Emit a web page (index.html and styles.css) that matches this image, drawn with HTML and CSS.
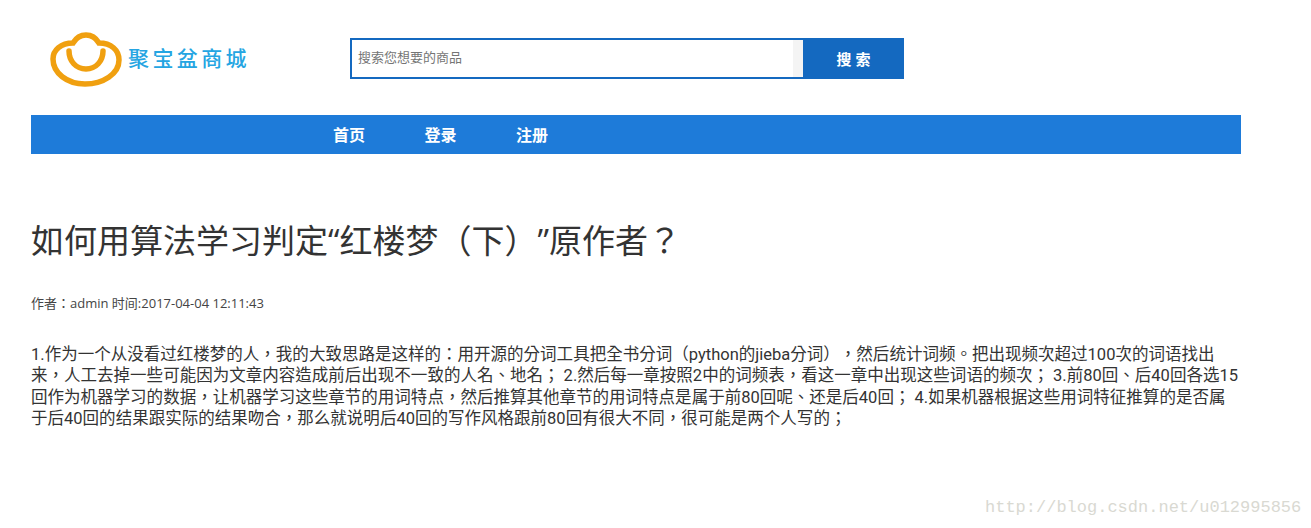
FILE: index.html
```html
<!DOCTYPE html>
<html lang="zh-Hant">
<head>
<meta charset="utf-8">
<title>如何用算法学习判定“红楼梦（下）”原作者？</title>
<link rel="stylesheet" href="styles.css">
</head>
<body>
<div class="page">
  <header class="top">
    <a class="logo">
      <svg class="logo-mark" width="74" height="58" viewBox="0 0 74 58">
        <path class="logo-stroke" d="M24 11C27 6 32 3 37 3C42 3 47 6 50 11C62 11 70 18 70 28C70 42 54 52 36 52C18 52 4 41 4 27C4 18 12 11 24 11Z"/>
        <path class="logo-stroke" d="M20 19C20 29 27 37 37 37C47 37 54 29 54 19"/>
      </svg>
      <span class="logo-text" lang="zh-Hans">聚宝盆商城</span>
    </a>
    <form class="search">
      <div class="search-box"><span class="search-hint">搜索您想要的商品</span><span class="search-end"></span></div>
      <div class="search-btn">搜 索</div>
    </form>
  </header>
  <nav class="nav">
    <a class="nav-item">首页</a>
    <a class="nav-item">登录</a>
    <a class="nav-item">注册</a>
  </nav>
  <h1 class="title">如何用算法学习判定“红楼梦（下）”原作者？</h1>
  <p class="meta">作者：admin 时间:2017-04-04 12:11:43</p>
  <p class="body">1.作为一个从没看过红楼梦的人，我的大致思路是这样的：用开源的分词工具把全书分词（python的jieba分词），然后统计词频。把出现频次超过100次的词语找出来，人工去掉一些可能因为文章内容造成前后出现不一致的人名、地名； 2.然后每一章按照2中的词频表，看这一章中出现这些词语的频次； 3.前80回、后40回各选15回作为机器学习的数据，让机器学习这些章节的用词特点，然后推算其他章节的用词特点是属于前80回呢、还是后40回； 4.如果机器根据这些用词特征推算的是否属于后40回的结果跟实际的结果吻合，那么就说明后40回的写作风格跟前80回有很大不同，很可能是两个人写的；</p>
</div>
<div class="watermark">http://blog.csdn.net/u012995856</div>
</body>
</html>
```
FILE: styles.css
```css
html, body {
  margin: 0;
  padding: 0;
  height: 528px;
  overflow: hidden;
  background: #fff;
}
body {
  font-family: "Open Sans", "Noto Sans CJK TC", sans-serif;
  color: #333;
  position: relative;
  text-spacing-trim: space-all;
}
.page {
  width: 1210px;
  margin-left: 31px;
}
.top {
  display: flex;
  height: 115px;
  padding-left: 18px;
  box-sizing: border-box;
}
.logo {
  display: flex;
  align-items: flex-start;
  width: 301px;
  padding-top: 32px;
}
.logo-mark { flex: none; }
.logo-stroke {
  fill: none;
  stroke: #f0a010;
  stroke-width: 5.5;
  stroke-linecap: round;
}
.logo-text {
  margin: 12px 0 0 5px;
  font-family: "Noto Sans CJK SC", sans-serif;
  font-size: 21px;
  line-height: 26px;
  letter-spacing: 3.4px;
  font-weight: 500;
  color: #25a5e2;
  white-space: nowrap;
}
.search {
  display: flex;
  width: 554px;
  height: 41px;
  margin: 38px 0 0;
}
.search-box {
  flex: 1;
  display: flex;
  align-items: center;
  justify-content: space-between;
  box-sizing: border-box;
  border: 2px solid #1469c0;
  border-right: 0;
  padding-left: 6px;
  background: #fff;
}
.search-hint {
  font-size: 13px;
  color: #757575;
  margin-top: -4px;
}
.search-end {
  align-self: stretch;
  width: 10px;
  background: #f4f4f4;
}
.search-btn {
  flex: none;
  width: 101px;
  background: #1469c0;
  color: #fff;
  font-size: 15px;
  font-weight: 700;
  text-align: center;
  line-height: 43px;
}
.nav {
  display: flex;
  gap: 59.5px;
  height: 39px;
  padding-left: 302px;
  background: #1e7bd9;
}
.nav-item {
  color: #fff;
  font-size: 16px;
  font-weight: 700;
  line-height: 40px;
}
.title {
  margin: 64px 0 0;
  font-size: 33px;
  line-height: 46px;
  font-weight: 400;
  color: #333;
}
.meta {
  margin: 30px 0 0;
  font-size: 13px;
  line-height: 18px;
  color: #444;
}
.body {
  margin: 32px 0 0;
  font-family: Roboto, "Noto Sans CJK TC", sans-serif;
  font-size: 16.52px;
  line-height: 21.3px;
  color: #333;
}
.watermark {
  position: absolute;
  left: 985px;
  top: 498px;
  font-family: "Liberation Mono", monospace;
  font-size: 17px;
  line-height: 20px;
  color: #d9d9d2;
  white-space: nowrap;
}
```
